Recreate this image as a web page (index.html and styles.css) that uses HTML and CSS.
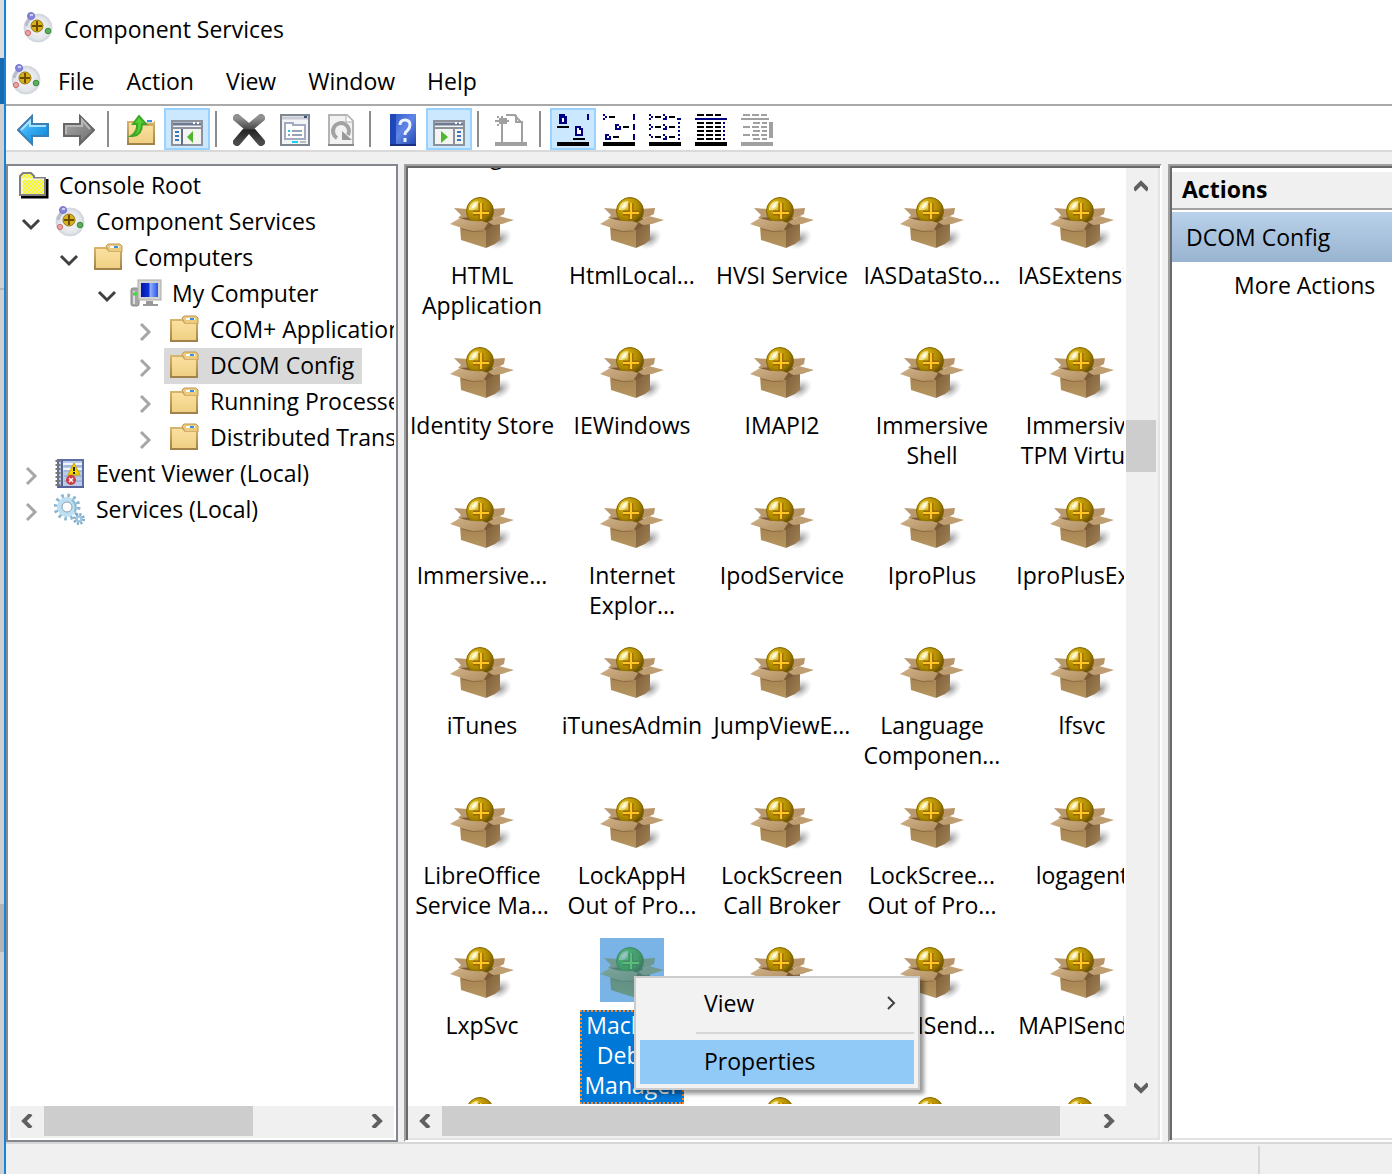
FILE: index.html
```html
<!DOCTYPE html>
<html lang="en">
<head>
<meta charset="utf-8">
<title>Component Services</title>
<link rel="stylesheet" href="styles.css">
</head>
<body>
<svg class="sprites" aria-hidden="true">
  <defs>
    <radialGradient id="gold" cx="35%" cy="30%" r="75%"><stop offset="0" stop-color="#f0de6c"/><stop offset=".3" stop-color="#c8a208"/><stop offset=".65" stop-color="#a98500"/><stop offset="1" stop-color="#5e4700"/></radialGradient>
    <linearGradient id="card" x1="0" y1="0" x2="0" y2="1"><stop offset="0" stop-color="#a68150"/><stop offset="1" stop-color="#b5965f"/></linearGradient>
    <linearGradient id="side" x1="0" y1="0" x2="1" y2="1"><stop offset="0" stop-color="#7b5d38"/><stop offset="1" stop-color="#a58355"/></linearGradient>
    <linearGradient id="flap" x1="0" y1="0" x2="1" y2="1"><stop offset="0" stop-color="#d0b189"/><stop offset="1" stop-color="#b08e60"/></linearGradient>
    <radialGradient id="shade"><stop offset="0" stop-color="#888" stop-opacity=".9"/><stop offset="1" stop-color="#bbb" stop-opacity="0"/></radialGradient>
    <linearGradient id="paper" x1="0" y1="0" x2="0" y2="1"><stop offset="0" stop-color="#fbe0a0"/><stop offset="1" stop-color="#efd083"/></linearGradient>
    <linearGradient id="edge" x1="0" y1="0" x2="0" y2="1"><stop offset="0" stop-color="#d9b56c"/><stop offset="1" stop-color="#a08048"/></linearGradient>
    <linearGradient id="blue" x1="0" y1="0" x2="1" y2="1"><stop offset="0" stop-color="#7fd4ff"/><stop offset=".5" stop-color="#2fa8f0"/><stop offset="1" stop-color="#0d7fd6"/></linearGradient>
    <linearGradient id="grey" x1="0" y1="0" x2="1" y2="1"><stop offset="0" stop-color="#aaa"/><stop offset="1" stop-color="#6e6e6e"/></linearGradient>
    <linearGradient id="dark" x1="0" y1="0" x2="0" y2="1"><stop offset="0" stop-color="#909090"/><stop offset=".45" stop-color="#4a4a4a"/><stop offset=".5" stop-color="#222"/><stop offset="1" stop-color="#4a4a4a"/></linearGradient>
    <linearGradient id="book" x1="0" y1="0" x2="1" y2="1"><stop offset="0" stop-color="#2c55c8"/><stop offset=".5" stop-color="#5f86e6"/><stop offset="1" stop-color="#2145ad"/></linearGradient>
    <linearGradient id="screen" x1="0" y1="0" x2="1" y2="0"><stop offset="0" stop-color="#0016a8"/><stop offset=".45" stop-color="#1232d8"/><stop offset=".55" stop-color="#8fb0ff"/><stop offset="1" stop-color="#2a50ee"/></linearGradient>
    <radialGradient id="disc"><stop offset="0" stop-color="#f8f8fa"/><stop offset=".8" stop-color="#e2e5ea"/><stop offset="1" stop-color="#ccd2da"/></radialGradient>
    <pattern id="dither" width="4" height="4" patternUnits="userSpaceOnUse"><rect width="4" height="4" fill="#e6e6c0"/><path d="M0 0h2v2H0zM2 2h2v2H2z" fill="#ff0"/></pattern>
  </defs>
  <symbol id="box" viewBox="0 0 64 64">
    <ellipse cx="50" cy="51" rx="13" ry="9" transform="rotate(-35 50 51)" fill="url(#shade)"/>
    <path d="M4 20l14 1 4 12-14-3 3-3z" fill="#b99a70"/><path d="M55 20l-14 1-4 12 13-5 4-2z" fill="#b8966a"/>
    <path d="M10 30l28-2 12 6-12 8-26 0z" fill="#7a5a34"/>
    <circle cx="30" cy="23" r="13.5" fill="url(#gold)" stroke="#846703"/>
    <path d="M19 20q2-7 9-7v3q-1 5-5 6h-4z" fill="#efe28c"/><path d="M22 18q2-3 5-4l-1 4q-1 2-4 2z" fill="#fffbd8"/>
    <path d="M31 15v17M23 25h16" stroke="#9a6a00" stroke-width="5"/><path d="M31 15v16M23 25h16" stroke="#ffc626" stroke-width="2.2"/>
    <path d="M10 38l26 4v18l-25-8z" fill="url(#card)"/><path d="M36 42l14-8v18l-5 4-9 4z" fill="url(#side)"/>
    <path d="M10 30q12 4 22 3l6 2-5 8q-9 2-21-3L0 36z" fill="url(#flap)"/>
    <path d="M38 34l11-6 15 4-12 4-9 1z" fill="#bf9e72"/><path d="M12 41q11 4 21 2" stroke="#8c6a42" fill="none"/>
  </symbol>
  <symbol id="com" viewBox="0 0 32 32">
    <circle cx="16" cy="17" r="14" fill="url(#disc)" stroke="#d3d8df"/><path d="M4 15q1-7 9-10" stroke="#b9bdc9" stroke-width="3" fill="none"/>
    <circle cx="15" cy="15" r="6" fill="#d8b01c" stroke="#98760a"/><path d="M15 10v10M10 15h10" stroke="#6b4d00" stroke-width="2"/>
    <circle cx="9" cy="5" r="3.5" fill="#8585dc" stroke="#7474cc"/><path d="M8 4h3" stroke="#e6e6ff" stroke-width="1.5"/>
    <circle cx="6" cy="22" r="2.6" fill="#e9a5a5" stroke="#cf6a6a"/><circle cx="26" cy="20" r="2.8" fill="#5cae5c" stroke="#378c3a"/>
  </symbol>
  <symbol id="folder" viewBox="0 0 32 32">
    <path d="M2 6h12l3 3h13v20H2z" fill="url(#edge)"/><path d="M14 5l2-2h12l2 2v6H17z" fill="#ecca80" stroke="#bd9850"/><path d="M18 6h9" stroke="#fff" stroke-width="2"/><path d="M22 6h4" stroke="#3a8ee0" stroke-width="2"/>
    <path d="M4 8h10l3 3h11v16H4z" fill="url(#paper)"/>
  </symbol>
  <symbol id="rootfolder" viewBox="0 0 32 32">
    <path d="M4 28h26V10" stroke="#000" stroke-width="3" fill="none"/><path d="M3 9V7l3-3h8l3 3v2h11v17H3z" fill="url(#dither)" stroke="#808080" stroke-width="2"/><path d="M5 25V10h22" stroke="#fff" fill="none"/>
  </symbol>
  <symbol id="pc" viewBox="0 0 32 32">
    <rect x="1" y="11" width="8" height="18" rx="2" fill="#a6a6a6" stroke="#888"/><path d="M4 14v13" stroke="#ddd" stroke-width="2"/><path d="M3 17h4" stroke="#3bdc3b" stroke-width="3"/>
    <path d="M16 24h7v3h5v2H13v-2h3z" fill="#999"/><rect x="8" y="3" width="23" height="20" fill="#d4d4ce" stroke="#aaa"/><rect x="11" y="6" width="17" height="14" fill="url(#screen)"/>
  </symbol>
  <symbol id="event" viewBox="0 0 32 32">
    <rect x="4" y="3" width="25" height="27" fill="#b9cbe8" stroke="#5f6da5" stroke-width="2"/><path d="M10 9h18M10 14h18M10 19h18M10 24h18" stroke="#8fa3cf"/><path d="M9 7h19M9 12h19" stroke="#eef4ff" stroke-width="2"/><path d="M4 30h26" stroke="#59619a" stroke-width="2"/>
    <path d="M4 3v27" stroke="#777" stroke-width="5" stroke-dasharray="2 2"/><path d="M8 3v26" stroke="#5b628a" stroke-width="2"/>
    <path d="M20 6l6 12H14z" fill="#f5d400" stroke="#c9a800"/><path d="M20 10v4M20 15v2" stroke="#222" stroke-width="2"/><circle cx="17" cy="23" r="5" fill="#cf3b42"/><path d="M15 21l4 4m0-4l-4 4" stroke="#fff" stroke-width="1.5"/>
  </symbol>
  <symbol id="gears" viewBox="0 0 32 32">
    <circle cx="13" cy="14" r="11.5" fill="none" stroke="#8fb5d0" stroke-width="4" stroke-dasharray="2.6 3.42"/><circle cx="13" cy="14" r="7.5" fill="#fff" stroke="#bcdff2" stroke-width="5"/><circle cx="13" cy="14" r="5" fill="none" stroke="#8f9fb3"/><path d="M18 7q5 4 3 12" stroke="#8db9d8" stroke-width="2" fill="none"/>
    <circle cx="25" cy="26" r="4.5" fill="none" stroke="#7da6c4" stroke-width="3" stroke-dasharray="2 1.5"/><circle cx="25" cy="26" r="2.5" fill="#fff" stroke="#9cc4df" stroke-width="2.5"/>
  </symbol>
  <symbol id="open" viewBox="0 0 20 20"><path d="M2 6l8 8 8-8" fill="none" stroke="#404040" stroke-width="3"/></symbol>
  <symbol id="shut" viewBox="0 0 20 20"><path d="M6 2l8 8-8 8" fill="none" stroke="#a6a6a6" stroke-width="3"/></symbol>
  <symbol id="sub" viewBox="0 0 20 20"><path d="M7 4l6 6-6 6" fill="none" stroke="#404040" stroke-width="2"/></symbol>
  <symbol id="back" viewBox="0 0 32 32"><path d="M1 16L15 2v8h16v12H15v8z" fill="url(#blue)" stroke="#3d7fb3" stroke-width="2"/><path d="M4 16l9-9v5h16" stroke="#a8e3ff" fill="none" stroke-width="2"/></symbol>
  <symbol id="forward" viewBox="0 0 32 32"><path d="M31 16L17 2v8H1v12h16v8z" fill="url(#grey)" stroke="#666" stroke-width="2"/><path d="M3 20v-8h16V6l8 9" stroke="#b8b8b8" fill="none" stroke-width="2"/></symbol>
  <symbol id="up" viewBox="0 0 32 32"><path d="M2 7h28v24H2z" fill="url(#edge)"/><path d="M18 7h11" stroke="#fff" stroke-width="3"/><path d="M22 7h5" stroke="#3a8ee0" stroke-width="2"/><path d="M4 9h10l3 3h11v17H4z" fill="url(#paper)"/><path d="M6 22q7-4 6-12H8l6-8 7 8h-4q0 11-9 12z" fill="#55d034" stroke="#3fa627" stroke-width="2"/></symbol>
  <symbol id="paneleft" viewBox="0 0 32 32"><path d="M1 7h30v24H1z" fill="#f4f4f2" stroke="#8b929c" stroke-width="2"/><path d="M2 10h28" stroke="#6d7a94" stroke-width="3"/><path d="M2 14h28" stroke="#8b929c" stroke-width="2"/><path d="M22 9h2m2 0h2" stroke="#fff" stroke-width="2"/><path d="M11 15v16" stroke="#5f6d88" stroke-width="2"/><path d="M4 18h4m-4 4h4m-4 4h4" stroke="#3976bd" stroke-width="2"/><path d="M22 17v12l-6-6z" fill="#4cb82c"/></symbol>
  <symbol id="paneright" viewBox="0 0 32 32"><path d="M1 7h30v24H1z" fill="#f4f4f2" stroke="#8b929c" stroke-width="2"/><path d="M2 10h28" stroke="#6d7a94" stroke-width="3"/><path d="M2 14h28" stroke="#8b929c" stroke-width="2"/><path d="M22 9h2m2 0h2" stroke="#fff" stroke-width="2"/><path d="M21 15v16" stroke="#8b929c" stroke-width="2"/><path d="M24 18h4m-4 4h4m-4 4h4" stroke="#3976bd" stroke-width="2"/><path d="M8 17v12l7-6z" fill="#4cb82c"/></symbol>
  <symbol id="delete" viewBox="0 0 32 32"><path d="M4 4l12 10L28 4M16 14L4 28M16 14l12 14" fill="none" stroke="url(#dark)" stroke-width="8" stroke-linecap="round"/></symbol>
  <symbol id="props" viewBox="0 0 32 32"><path d="M2 1h28v30H2z" fill="#f3f4f6" stroke="#7e868f" stroke-width="2"/><path d="M3 4h26" stroke="#c8cbd3" stroke-width="3"/><path d="M25 3h3" stroke="#3c4c78" stroke-width="2"/><path d="M6 9h8v2h12v14H6z" fill="#fff" stroke="#a4aac0" stroke-width="2"/><path d="M13 17h10M13 21h10M9 21h2" stroke="#99a2b5" stroke-width="2"/><path d="M9 17h2" stroke="#18c9f3" stroke-width="2"/><path d="M13 28h6" stroke="#13d0fa" stroke-width="2"/><path d="M21 28h6" stroke="#bbb" stroke-width="2"/></symbol>
  <symbol id="refresh" viewBox="0 0 32 32"><path d="M4 1h18l6 6v24H4z" fill="#f2f2f2" stroke="#b4b4b4" stroke-width="2"/><path d="M3 31h26" stroke="#888" stroke-width="2"/><path d="M21 1v7h7" fill="#fff" stroke="#aaa"/><path d="M12 24a8 8 0 1 1 11-3" fill="none" stroke="#a2a2a2" stroke-width="4"/><path d="M17 17v9h10z" fill="#999"/></symbol>
  <symbol id="help" viewBox="0 0 32 32"><path d="M3 0h26v32H3z" fill="url(#book)"/><path d="M3 0h6v32H3z" fill="#1f47b8"/><path d="M3 31h26" stroke="#1b2f80" stroke-width="2"/><path d="M13 11q0-5 5-5t5 5q0 3-3 6-2 1-2 4M18 24v4" fill="none" stroke="#eef2ff" stroke-width="3"/></symbol>
  <symbol id="new" viewBox="0 0 32 32"><path d="M7 12v17h20V9l-6-6-1-2h-9" fill="none" stroke="#a0a0a0" stroke-width="2"/><path d="M21 1v7h7" fill="none" stroke="#a0a0a0" stroke-width="2"/><path d="M4 4h8v6H4zM0 6h14v2H0zM2 2h2v2H2zM2 10h2v2H2zM6 2h2v10H6z" fill="#a0a0a0"/><path d="M0 28h32v4H0z" fill="#a0a0a0"/></symbol>
  <symbol id="large" viewBox="0 0 32 32"><path d="M2 0h6v2h2v8H2zM18 12h6v2h2v8h-8z" fill="#000080"/><path d="M5 4h2v4H5zM20 14h2v2h2v4h-4z" fill="#fff"/><path d="M30 0h2v6h-2z" fill="#000080"/><path d="M0 12h12v2H0zM16 24h12v2H16zM0 28h32v4H0z"/></symbol>
  <symbol id="small" viewBox="0 0 32 32"><path d="M0 0h2v2H0zM2 2h2v2H2zM0 4h2v2H0zM12 10h4v2h2v4h-6zM2 20h4v2h2v4H2zM30 0h2v6h-2zM30 10h2v6h-2zM30 20h2v6h-2z" fill="#000080"/><path d="M6 2h6v2H6zM20 12h6v2h-6zM10 22h6v2h-6zM0 28h32v4H0z"/><path d="M14 12h2v2h-2zM4 22h2v2H4z" fill="#fff"/></symbol>
  <symbol id="list" viewBox="0 0 32 32"><path d="M0 0h2v2h2v2H2v2H0V4h2V2H0zM0 10h2v2h2v2H2v2H0v-2h2v-2H0zM0 22h2v2h2v-2H2v-2H0zM14 0h2v2h2v4h-4V4h2V2h-2zM14 10h2v2h2v4h-4v-2h2v-2h-2zM14 20h2v2h2v4h-4v-2h2v-2h-2zM28 4h4v2h-4zM29 8h2v2h-2zM29 12h2v2h-2zM29 16h2v2h-2zM29 20h2v2h-2zM29 24h2v2h-2z" fill="#000080"/><path d="M6 2h6v2H6zm0 10h6v2H6zm0 10h6v2H6zM20 2h6v2h-6zm0 10h6v2h-6zm0 10h6v2h-6zM0 28h32v4H0z"/></symbol>
  <symbol id="detail" viewBox="0 0 32 32"><path d="M2 1h24M2 9h24M2 13h24M2 17h24M2 21h24M2 25h24" stroke="#000" stroke-width="2" stroke-dasharray="7 2"/><path d="M0 4h32v2H0z" fill="#000080"/><path d="M29 8v18" stroke="#000080" stroke-width="2" stroke-dasharray="2 2"/><path d="M0 28h32v4H0z"/></symbol>
  <symbol id="custom" viewBox="0 0 32 32"><path d="M2 1h24M2 13h24M2 21h24M12 9h14M12 17h14M12 25h14" stroke="#a0a0a0" stroke-width="2" stroke-dasharray="7 2"/><path d="M0 4h28v2H0zM28 8h4v16h-4zM0 28h32v4H0z" fill="#a0a0a0"/></symbol>
  <symbol id="sleft" viewBox="0 0 14 14"><path d="M11 0L4 7l7 7" fill="none" stroke="#606060" stroke-width="4"/></symbol>
  <symbol id="sright" viewBox="0 0 14 14"><path d="M3 0l7 7-7 7" fill="none" stroke="#606060" stroke-width="4"/></symbol>
  <symbol id="sup" viewBox="0 0 14 14"><path d="M0 11l7-7 7 7" fill="none" stroke="#606060" stroke-width="4"/></symbol>
  <symbol id="sdown" viewBox="0 0 14 14"><path d="M0 3l7 7 7-7" fill="none" stroke="#606060" stroke-width="4"/></symbol>
</svg>

<div class="window">
  <header class="titlebar"><svg class="icon"><use href="#com"/></svg><h1>Component Services</h1></header>
  <nav class="menubar">
    <svg class="icon"><use href="#com"/></svg>
    <button>File</button><button>Action</button><button>View</button><button>Window</button><button>Help</button>
  </nav>
  <div class="toolbar">
    <button aria-label="Back"><svg class="icon"><use href="#back"/></svg></button>
    <button aria-label="Forward"><svg class="icon"><use href="#forward"/></svg></button>
    <span class="divider"></span>
    <button aria-label="Up one level"><svg class="icon"><use href="#up"/></svg></button>
    <button class="on" aria-label="Show console tree"><svg class="icon"><use href="#paneleft"/></svg></button>
    <span class="divider"></span>
    <button aria-label="Delete"><svg class="icon"><use href="#delete"/></svg></button>
    <button aria-label="Properties"><svg class="icon"><use href="#props"/></svg></button>
    <button aria-label="Refresh"><svg class="icon"><use href="#refresh"/></svg></button>
    <span class="divider"></span>
    <button aria-label="Help"><svg class="icon"><use href="#help"/></svg></button>
    <button class="on" aria-label="Show action pane"><svg class="icon"><use href="#paneright"/></svg></button>
    <span class="divider"></span>
    <button aria-label="New"><svg class="icon"><use href="#new"/></svg></button>
    <span class="divider"></span>
    <button class="on" aria-label="Large icons"><svg class="icon"><use href="#large"/></svg></button>
    <button aria-label="Small icons"><svg class="icon"><use href="#small"/></svg></button>
    <button aria-label="List"><svg class="icon"><use href="#list"/></svg></button>
    <button aria-label="Detail"><svg class="icon"><use href="#detail"/></svg></button>
    <button aria-label="Status"><svg class="icon"><use href="#custom"/></svg></button>
  </div>

  <main class="panes">
    <section class="tree-pane">
      <ul class="tree">
        <li class="root"><span class="node"><svg class="icon"><use href="#rootfolder"/></svg>Console Root</span></li>
        <li><svg class="twist"><use href="#open"/></svg><span class="node"><svg class="icon"><use href="#com"/></svg>Component Services</span></li>
        <li class="l2"><svg class="twist"><use href="#open"/></svg><span class="node"><svg class="icon"><use href="#folder"/></svg>Computers</span></li>
        <li class="l3"><svg class="twist"><use href="#open"/></svg><span class="node"><svg class="icon"><use href="#pc"/></svg>My Computer</span></li>
        <li class="l4"><svg class="twist"><use href="#shut"/></svg><span class="node"><svg class="icon"><use href="#folder"/></svg>COM+ Applications</span></li>
        <li class="l4"><svg class="twist"><use href="#shut"/></svg><span class="node selected"><svg class="icon"><use href="#folder"/></svg>DCOM Config</span></li>
        <li class="l4"><svg class="twist"><use href="#shut"/></svg><span class="node"><svg class="icon"><use href="#folder"/></svg>Running Processes</span></li>
        <li class="l4"><svg class="twist"><use href="#shut"/></svg><span class="node"><svg class="icon"><use href="#folder"/></svg>Distributed Transaction</span></li>
        <li><svg class="twist"><use href="#shut"/></svg><span class="node"><svg class="icon"><use href="#event"/></svg>Event Viewer (Local)</span></li>
        <li><svg class="twist"><use href="#shut"/></svg><span class="node"><svg class="icon"><use href="#gears"/></svg>Services (Local)</span></li>
      </ul>
      <div class="hbar">
        <button aria-label="Scroll left"><svg><use href="#sleft"/></svg></button>
        <span class="track"><span class="thumb tree-thumb"></span></span>
        <button aria-label="Scroll right"><svg><use href="#sright"/></svg></button>
      </div>
    </section>

    <section class="list-pane">
      <div class="view">
        <div class="scrolled">g</div>
        <div class="items">
          <div class="item"><svg><use href="#box"/></svg><span>HTML<br>Application</span></div>
          <div class="item"><svg><use href="#box"/></svg><span>HtmlLocal...</span></div>
          <div class="item"><svg><use href="#box"/></svg><span>HVSI Service</span></div>
          <div class="item"><svg><use href="#box"/></svg><span>IASDataSto...</span></div>
          <div class="item"><svg><use href="#box"/></svg><span>IASExtensi...</span></div>
          <div class="item"><svg><use href="#box"/></svg><span>Identity Store</span></div>
          <div class="item"><svg><use href="#box"/></svg><span>IEWindows</span></div>
          <div class="item"><svg><use href="#box"/></svg><span>IMAPI2</span></div>
          <div class="item"><svg><use href="#box"/></svg><span>Immersive<br>Shell</span></div>
          <div class="item"><svg><use href="#box"/></svg><span>Immersive<br>TPM Virtu...</span></div>
          <div class="item"><svg><use href="#box"/></svg><span>Immersive...</span></div>
          <div class="item"><svg><use href="#box"/></svg><span>Internet<br>Explor...</span></div>
          <div class="item"><svg><use href="#box"/></svg><span>IpodService</span></div>
          <div class="item"><svg><use href="#box"/></svg><span>IproPlus</span></div>
          <div class="item"><svg><use href="#box"/></svg><span>IproPlusEx...</span></div>
          <div class="item"><svg><use href="#box"/></svg><span>iTunes</span></div>
          <div class="item"><svg><use href="#box"/></svg><span>iTunesAdmin</span></div>
          <div class="item"><svg><use href="#box"/></svg><span>JumpViewE...</span></div>
          <div class="item"><svg><use href="#box"/></svg><span>Language<br>Componen...</span></div>
          <div class="item"><svg><use href="#box"/></svg><span>lfsvc</span></div>
          <div class="item"><svg><use href="#box"/></svg><span>LibreOffice<br>Service Ma...</span></div>
          <div class="item"><svg><use href="#box"/></svg><span>LockAppH<br>Out of Pro...</span></div>
          <div class="item"><svg><use href="#box"/></svg><span>LockScreen<br>Call Broker</span></div>
          <div class="item"><svg><use href="#box"/></svg><span>LockScree...<br>Out of Pro...</span></div>
          <div class="item"><svg><use href="#box"/></svg><span>logagent</span></div>
          <div class="item"><svg><use href="#box"/></svg><span>LxpSvc</span></div>
          <div class="item picked"><i class="tint"><svg><use href="#box"/></svg></i><span>Machine<br>Debug<br>Manager</span>
            <div class="context">
              <button>View<svg><use href="#sub"/></svg></button>
              <hr>
              <button class="hover">Properties</button>
            </div>
          </div>
          <div class="item"><svg><use href="#box"/></svg></div>
          <div class="item"><svg><use href="#box"/></svg><span>MAPISend...</span></div>
          <div class="item"><svg><use href="#box"/></svg><span>MAPISend...</span></div>
          <div class="item"><svg><use href="#box"/></svg></div>
          <div class="item"></div>
          <div class="item"><svg><use href="#box"/></svg></div>
          <div class="item"><svg><use href="#box"/></svg></div>
          <div class="item"><svg><use href="#box"/></svg></div>
        </div>
      </div>
      <div class="vbar">
        <button aria-label="Scroll up"><svg><use href="#sup"/></svg></button>
        <span class="track"><span class="thumb"></span></span>
        <button aria-label="Scroll down"><svg><use href="#sdown"/></svg></button>
      </div>
      <div class="hbar">
        <button aria-label="Scroll left"><svg><use href="#sleft"/></svg></button>
        <span class="track"><span class="thumb list-thumb"></span></span>
        <button aria-label="Scroll right"><svg><use href="#sright"/></svg></button>
      </div>
    </section>

    <aside class="actions">
      <h2>Actions</h2>
      <h3>DCOM Config</h3>
      <button>More Actions</button>
    </aside>
  </main>
  <footer class="status"><span></span></footer>
</div>
</body>
</html>
```
FILE: styles.css
```css
* { box-sizing: border-box; }
body {
  margin: 0;
  height: 100vh;
  padding-left: 4px;
  overflow: hidden;
  background: linear-gradient(#dcdcdc 58px, #1769b0 58px, #1769b0 104px, #d0d0d0 104px, #d0d0d0 288px, #b4b4b4 288px, #b4b4b4 290px, #d0d0d0 290px, #d0d0d0 904px, #b4b4b4 904px, #b4b4b4 952px, #d0d0d0 952px);
  font: 23px/30px "Open Sans", "Noto Sans", sans-serif;
  color: #000;
}
button { font: inherit; color: inherit; background: none; border: 0; padding: 0; margin: 0; }
h1, h2, h3, ul { margin: 0; padding: 0; font: inherit; list-style: none; }
svg { display: block; flex: none; }
.sprites { position: absolute; width: 0; height: 0; }
.icon { width: 32px; height: 32px; }

.window { height: 100%; display: flex; flex-direction: column; border-left: 2px solid #1883d7; background: #f0f0f0; }
.titlebar { height: 58px; display: flex; align-items: center; gap: 10px; padding: 0 16px; background: #fff; }
.titlebar .icon, .menubar .icon { margin-bottom: 4px; }
.menubar { height: 48px; display: flex; align-items: center; padding-left: 4px; background: #fff; border-bottom: 2px solid #a9a9a9; }
.menubar button { padding: 0 16px; }
.toolbar { height: 46px; display: flex; align-items: center; padding-left: 4px; background: #fff; border-bottom: 2px solid #d9d9d9; }
.toolbar button { width: 46px; height: 42px; display: flex; align-items: center; justify-content: center; padding-top: 2px; border: 2px solid transparent; margin-top: 2px; }
.toolbar .on { background: #cce8ff; border-color: #99d1ff; }
.divider { width: 2px; height: 36px; margin: 2px 9px 0 5px; background: #8d8d8d; }

.panes { flex: 1; min-height: 0; display: grid; grid-template-columns: 392px 758px 1fr; column-gap: 6px; padding-top: 12px; }
.tree-pane { display: flex; flex-direction: column; min-width: 0; background: #fff; border: 2px solid #828790; padding: 2px; }
.tree { flex: 1; overflow: hidden; white-space: nowrap; }
.tree li { display: flex; height: 36px; padding-left: 2px; }
.tree .root { padding-left: 4px; }
.tree .l2 { padding-left: 40px; }
.tree .l3 { padding-left: 78px; }
.tree .l4 { padding-left: 116px; }
.twist { width: 20px; height: 20px; margin: 10px 9px 0; }
.node { display: flex; align-items: center; gap: 10px; padding: 0 8px 2px 4px; }
.root .node { padding-left: 3px; }
.selected { background: #d9d9d9; }

.hbar { height: 32px; display: flex; background: #f0f0f0; }
.hbar button { width: 34px; display: flex; align-items: center; justify-content: center; padding-bottom: 2px; }
.hbar svg, .vbar svg { width: 14px; height: 14px; }
.track { flex: 1; display: block; }
.thumb { display: block; background: #cdcdcd; }
.tree-thumb { width: 66%; height: 30px; }
.list-thumb { width: 95%; height: 30px; }
.vbar { display: flex; flex-direction: column; background: #f0f0f0; }
.vbar button { height: 36px; display: flex; align-items: center; justify-content: center; padding-right: 2px; }
.vbar .thumb { height: 52px; width: 30px; margin-top: 216px; }

.list-pane { display: grid; grid-template: 1fr 32px / 1fr 32px; min-height: 0; background: #f0f0f0; border: 2px solid; border-color: #a0a0a0 #fff #fff #a0a0a0; box-shadow: inset 2px 2px #696969, inset -2px -2px #e3e3e3; padding: 2px; }
.view { min-height: 0; overflow: hidden; background: #fff; border: solid #fff; border-width: 0 2px 2px 0; }
.scrolled { height: 20px; line-height: 30px; margin-top: -28px; margin-bottom: 28px; padding-left: 82px; }
.items { display: grid; grid-template-columns: repeat(5, 150px); grid-auto-rows: 150px; margin-left: -1px; }
.item { position: relative; display: flex; flex-direction: column; align-items: center; gap: 8px; text-align: center; white-space: nowrap; }
.item > svg, .tint { width: 64px; height: 64px; }
.tint { background: #7ab4e6; flex: none; }
.tint svg { width: 64px; height: 64px; opacity: .6; filter: hue-rotate(60deg) brightness(.8); }
.picked span { background: #0078d7; color: #fff; outline: 2px dotted #ff8728; outline-offset: -2px; padding: 0 4px 4px; }

.context { position: absolute; left: 77px; top: 38px; z-index: 1; width: 286px; padding: 4px; background: #f2f2f2; border: 2px solid #ccc; box-shadow: 4px 4px 4px rgba(0, 0, 0, .4); }
.context button { width: 100%; height: 44px; padding: 0 13px 2px 64px; display: flex; align-items: center; justify-content: space-between; }
.context svg { width: 20px; height: 20px; }
.context hr { margin: 6px 0 6px 56px; border: 0; height: 2px; background: #d7d7d7; }
.context .hover { background: #91c9f7; }

.actions { min-width: 0; overflow: hidden; background: #fff; border: solid; border-width: 2px 0 2px 2px; border-color: #a0a0a0 #fff #fff #a0a0a0; box-shadow: inset 2px 2px #696969, inset 0 -2px #e3e3e3; padding: 6px 0 0 2px; white-space: nowrap; }
.actions h2 { height: 38px; line-height: 34px; padding-left: 10px; font-weight: 700; background: #f0f0f0; border-bottom: 2px solid #a0a0a0; }
.actions h3 { margin-top: 2px; height: 50px; line-height: 50px; padding-left: 14px; background: linear-gradient(#b9d1ea, #99b4d1); }
.actions button { display: block; height: 48px; padding: 0 0 2px 62px; }
.status { height: 32px; border-top: 2px solid #d7d7d7; display: flex; justify-content: flex-end; padding-top: 2px; }
.status span { width: 134px; border-left: 2px solid #d7d7d7; }
```
